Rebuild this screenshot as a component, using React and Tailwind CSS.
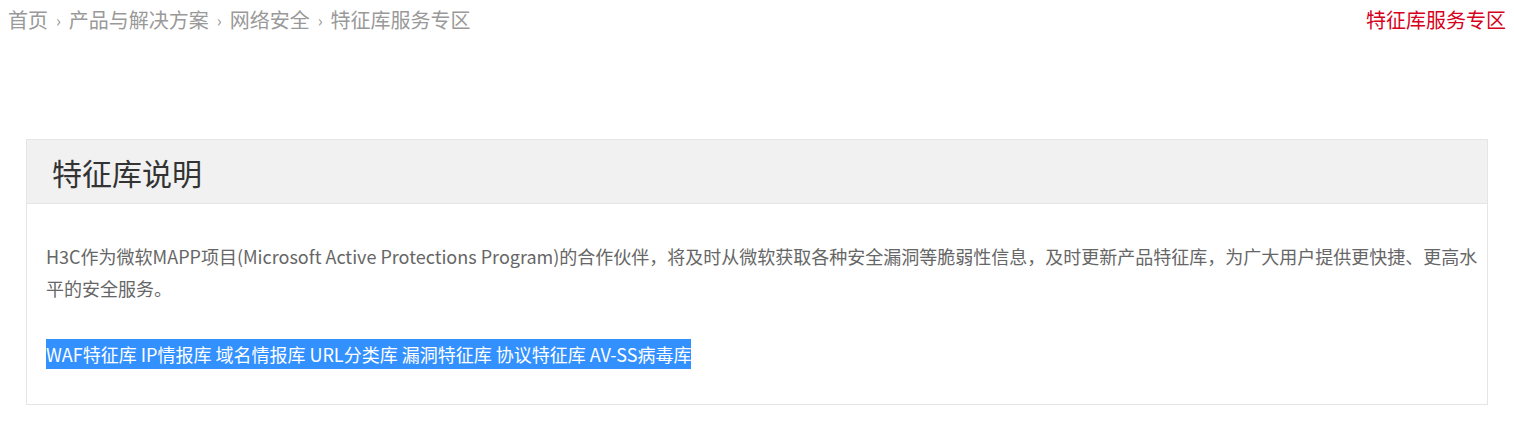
export default function App() {
  const font = { fontFamily: '"Noto Sans CJK SC", "Noto Sans", sans-serif' };
  return (
    <div className="w-[1514px] h-[429px] bg-white" style={font}>
      <div className="flex items-center justify-between h-[40px] pl-[8px] pr-[8px] text-[20px]">
        <div className="flex items-center text-[#999999]">
          <span>首页</span>
          <span className="mx-[8px] text-[16px]">›</span>
          <span>产品与解决方案</span>
          <span className="mx-[8px] text-[16px]">›</span>
          <span>网络安全</span>
          <span className="mx-[8px] text-[16px]">›</span>
          <span>特征库服务专区</span>
        </div>
        <div className="text-[#d7001c]">特征库服务专区</div>
      </div>
      <div className="mx-[26px] mt-[99px] border border-[#e5e5e5]">
        <div className="h-[64px] bg-[#f1f1f1] border-b border-[#e5e5e5] flex items-center pl-[25px]">
          <h2 className="text-[30px] text-[#333333] leading-none">特征库说明</h2>
        </div>
        <div className="pt-[36px] pb-[34px] pl-[19px] pr-[6px] text-[18px] leading-[32px] text-[#666666]">
          <p className="mb-[34px]">
            H3C作为微软MAPP项目(Microsoft Active Protections Program)的合作伙伴，将及时从微软获取各种安全漏洞等脆弱性信息，及时更新产品特征库，为广大用户提供更快捷、更高水平的安全服务。
          </p>
          <p>
            <span className="bg-[#3390ff] text-white py-[2px]">WAF特征库 IP情报库 域名情报库 URL分类库 漏洞特征库 协议特征库 AV-SS病毒库</span>
          </p>
        </div>
      </div>
    </div>
  );
}
